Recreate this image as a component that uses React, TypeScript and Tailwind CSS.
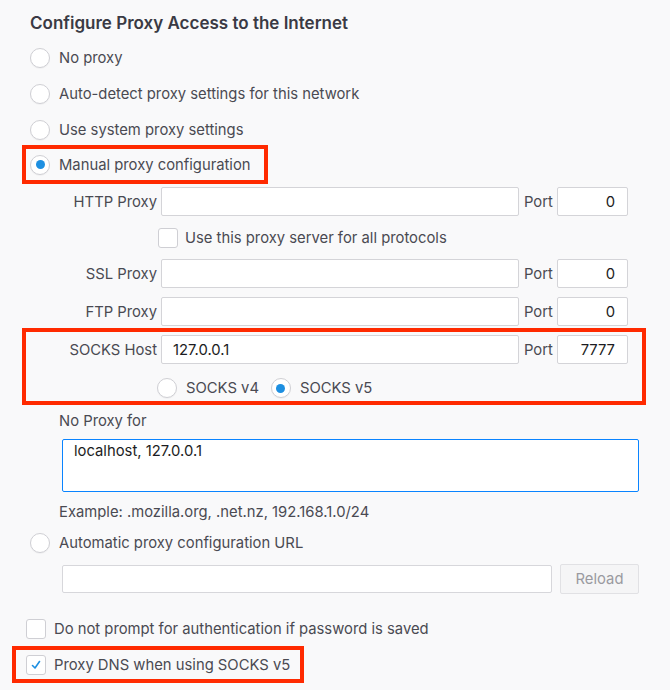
import React from "react";

function Radio({ checked = false }: { checked?: boolean }) {
  return (
    <span className="flex h-[20px] w-[20px] shrink-0 items-center justify-center rounded-full border border-[#cfcfd4] bg-white shadow-[0_1px_1px_rgba(0,0,0,0.04)]">
      {checked && <span className="h-[9px] w-[9px] rounded-full bg-[#1d8fe1]" />}
    </span>
  );
}

function Checkbox({ checked = false }: { checked?: boolean }) {
  return (
    <span className="flex h-[20px] w-[20px] shrink-0 items-center justify-center rounded-[3px] border border-[#cfcfd4] bg-white">
      {checked && (
        <svg width="12" height="12" viewBox="0 0 12 12" fill="none">
          <path d="M2.5 6.5 L5 9 L9.5 2.5" stroke="#1d8fe1" strokeWidth="1.6" strokeLinecap="round" strokeLinejoin="round" />
        </svg>
      )}
    </span>
  );
}

function Field({ w, value = "", right = false }: { w: string; value?: string; right?: boolean }) {
  return (
    <div
      className={`${w} flex h-[29px] items-center rounded-[2px] border border-[#d4d4d8] bg-white text-[#1c1c22] ${
        right ? "justify-end pr-[12px]" : "pl-[11px]"
      }`}
    >
      {value}
    </div>
  );
}

function ProxyRow({ label, value = "", port = "0", labelW = "w-[157px]" }: { label: string; value?: string; port?: string; labelW?: string }) {
  return (
    <div className="flex h-[29px] items-center">
      <span className={`${labelW} text-right`}>{label}</span>
      <div className="ml-[4px]">
        <Field w="w-[358px]" value={value} />
      </div>
      <span className="ml-[5px] w-[33px]">Port</span>
      <Field w="w-[71px]" value={port} right />
    </div>
  );
}

export default function App() {
  return (
    <div className="h-[690px] w-[670px] overflow-hidden bg-[#f9f9fa] font-['Inter',sans-serif] text-[14.8px] leading-[20px] text-[#4a4a52]">
      <h1 className="h-[34px] pl-[30px] pt-[12px] text-[17px] font-semibold leading-[22px] text-[#3a3a44]">
        Configure Proxy Access to the Internet
      </h1>

      <div className="mt-[6px]">
        {["No proxy", "Auto-detect proxy settings for this network", "Use system proxy settings"].map((t) => (
          <div key={t} className="flex h-[36px] items-center gap-[9px] pl-[30px]">
            <Radio />
            <span>{t}</span>
          </div>
        ))}
      </div>

      {/* manual */}
      <div className="-mt-[3px] ml-[22px] flex h-[39px] w-[246px] items-center gap-[9px] border-4 border-[#ff2a00] pl-[4px]">
        <Radio checked />
        <span>Manual proxy configuration</span>
      </div>

      <div className="mt-[3px]">
        <ProxyRow label="HTTP Proxy" />
      </div>

      <div className="mt-[12px] flex h-[20px] items-center gap-[7px] pl-[158px]">
        <Checkbox />
        <span>Use this proxy server for all protocols</span>
      </div>

      <div className="mt-[11px]">
        <ProxyRow label="SSL Proxy" />
      </div>
      <div className="mt-[9px]">
        <ProxyRow label="FTP Proxy" />
      </div>

      {/* socks */}
      <div className="ml-[22px] mt-[2px] w-[624px] border-4 border-[#ff2a00] pb-[3px] pt-[3px]">
        <ProxyRow label="SOCKS Host" value="127.0.0.1" port="7777" labelW="w-[131px]" />
        <div className="mt-[14px] flex h-[20px] items-center pl-[131px]">
          <Radio />
          <span className="ml-[9px]">SOCKS v4</span>
          <span className="ml-[12px]">
            <Radio checked />
          </span>
          <span className="ml-[9px]">SOCKS v5</span>
        </div>
      </div>

      <div className="mt-[6px] h-[20px] pl-[59px]">No Proxy for</div>
      <div className="ml-[62px] mt-[8px] h-[53px] w-[577px] rounded-[2px] border border-[#0a84ff] bg-white px-[11px] pt-[1px] text-[#1c1c22]">
        localhost, 127.0.0.1
      </div>
      <div className="mt-[10px] h-[20px] pl-[59px]">Example: .mozilla.org, .net.nz, 192.168.1.0/24</div>

      <div className="mt-[11px] flex h-[20px] items-center gap-[9px] pl-[30px]">
        <Radio />
        <span>Automatic proxy configuration URL</span>
      </div>

      <div className="mt-[12px] flex items-start pl-[62px]">
        <div className="h-[28px] w-[490px] rounded-[2px] border border-[#d7d7db] bg-white" />
        <button
          type="button"
          className="-mt-[1px] ml-[8px] h-[30px] w-[79px] rounded-[2px] border border-[#e1e1e4] bg-[#f5f5f6] text-[#9a9aa0]"
        >
          Reload
        </button>
      </div>

      <div className="mt-[25px] flex h-[20px] items-center gap-[8px] pl-[26px]">
        <Checkbox />
        <span>Do not prompt for authentication if password is saved</span>
      </div>

      <div className="ml-[12px] mt-[7px] flex h-[37px] w-[292px] items-center gap-[8px] border-4 border-[#ff2a00] pl-[10px]">
        <Checkbox checked />
        <span>Proxy DNS when using SOCKS v5</span>
      </div>
    </div>
  );
}
